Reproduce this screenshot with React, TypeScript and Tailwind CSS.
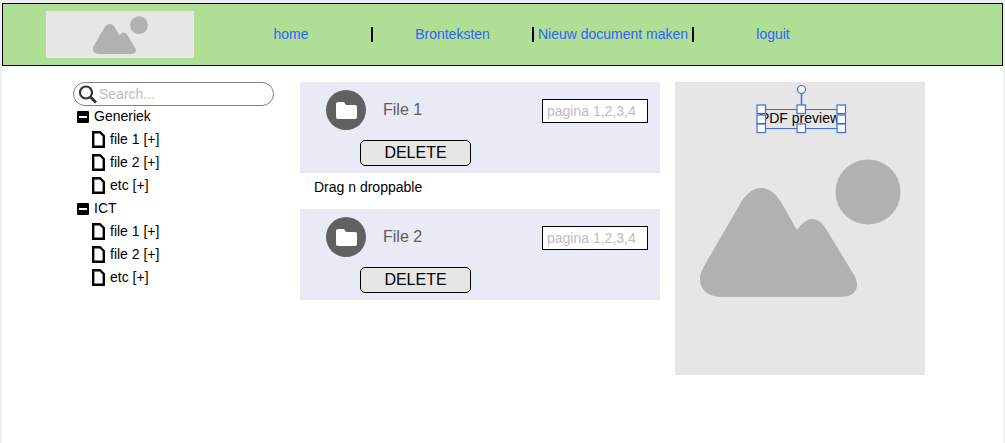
import React from 'react';

const font = 'font-["Liberation_Sans",Arial,sans-serif]';

/** Grey placeholder picture, drawn in the preview's own coordinates */
function PicturePlaceholder({ className }: { className: string }) {
  return (
    <svg viewBox="700 159 201 138" className={className} fill="#b1b1b1">
      <circle cx="868" cy="192" r="32.5" />
      <path d="M723 297C708 297 700 290 700 279C700 273 703 268 707 261L743 199C749 192 754 188 761 188C769 188 775 193 781 202L797 230C802 223 807 219 812 219C818 219 822 223 826 229L851 270C855 276 857 280 857 285C857 293 850 297 840 297Z" />
    </svg>
  );
}

function SearchIcon() {
  return (
    <svg width="19" height="19" viewBox="0 0 19 19" fill="none" stroke="#333333" className="shrink-0">
      <circle cx="8" cy="7.5" r="6" strokeWidth="2.2" />
      <path d="M12.5 12L18 17.5" strokeWidth="3" />
    </svg>
  );
}

function MinusBox() {
  return (
    <span className="flex h-[12px] w-[12px] shrink-0 items-center justify-center rounded-[1px] bg-black">
      <span className="h-[2px] w-[8px] bg-white" />
    </span>
  );
}

function FileIcon() {
  return (
    <svg width="13" height="17" viewBox="0 0 13 17" fill="#ffffff" stroke="#000000" strokeWidth="2.4" className="shrink-0">
      <path d="M1.2 1.2H8L11.8 5V15.8H1.2Z" />
    </svg>
  );
}

function FolderIcon() {
  return (
    <svg width="21" height="17" viewBox="0 0 21 17" fill="#ffffff">
      <path d="M2 0H8L10 3H19C20.2 3 21 3.8 21 5V15C21 16.2 20.2 17 19 17H2C0.8 17 0 16.2 0 15V2C0 0.8 0.8 0 2 0Z" />
    </svg>
  );
}

function NavItem({ label, className, divider = true }: { label: string; className: string; divider?: boolean }) {
  return (
    <div className={`flex h-full items-center ${className}`}>
      <a className="flex-1 text-center text-[14px] text-[#2f62f5]">{label}</a>
      {divider && <span className="h-[15px] w-[2px] bg-black" />}
    </div>
  );
}

function Tree({ title }: { title: string }) {
  return (
    <div>
      <div className="flex h-[23px] items-center gap-[5px] pl-[4px] text-[14px] text-black">
        <MinusBox />
        <span>{title}</span>
      </div>
      {['file 1 [+]', 'file 2 [+]', 'etc [+]'].map((name) => (
        <div key={name} className="flex h-[23px] items-center gap-[5px] pl-[19px] text-[14px] text-black">
          <FileIcon />
          <span>{name}</span>
        </div>
      ))}
    </div>
  );
}

function FileCard({ name }: { name: string }) {
  return (
    <div className="h-[91px] bg-[#e8eaf6] pl-[26px] pr-[12px] pt-[8px]">
      <div className="flex items-start">
        <div className="flex h-[40px] w-[40px] items-center justify-center rounded-full bg-[#616161]">
          <FolderIcon />
        </div>
        <span className="ml-[17px] mt-[10px] text-[16px] leading-[20px] text-[#5c5c5c]">{name}</span>
        <input
          placeholder="pagina 1,2,3,4"
          className="ml-auto mt-[9px] h-[24px] w-[106px] border border-black bg-white pl-[4px] text-[14px] outline-none placeholder:text-[#bdbdbd]"
        />
      </div>
      <button className="ml-[34px] mt-[10px] h-[26px] w-[111px] rounded-[5px] border border-black bg-[#e6e6e6] text-[16px] text-black">
        DELETE
      </button>
    </div>
  );
}

/** Editor selection handles lying over the "PDF preview" label */
function SelectionOverlay() {
  const handles = [
    [761, 109],
    [801, 109],
    [841, 109],
    [761, 119],
    [841, 119],
    [761, 128],
    [801, 128],
    [841, 128],
  ];
  return (
    <svg viewBox="750 84 100 50" className="absolute left-[75px] top-[2px] h-[50px] w-[100px]">
      <path d="M801.5 93V105" stroke="#3f6ae0" strokeWidth="1.5" />
      <rect x="760.5" y="109.5" width="81" height="19" fill="none" stroke="#3f6ae0" />
      <circle cx="801.5" cy="89.5" r="4" fill="#ffffff" stroke="#3f6ae0" strokeWidth="1.2" />
      {handles.map(([x, y]) => (
        <rect key={`${x}-${y}`} x={x - 4} y={y - 4} width="8.5" height="8.5" fill="#ffffff" stroke="#3f6ae0" strokeWidth="1.2" />
      ))}
    </svg>
  );
}

export default function App() {
  return (
    <div className={`${font} h-[443px] w-[1005px] overflow-hidden bg-[#eeeeee] pl-[2px] pr-[2px] pt-[3px]`}>
      <header className="flex h-[63px] items-center border border-black bg-[#afdf95] pl-[43px]">
        <div className="flex h-[47px] w-[148px] items-center justify-center bg-[#e6e6e6]">
          <PicturePlaceholder className="h-[38px] w-[55px]" />
        </div>
        <nav className="ml-[17px] flex h-full items-center">
          <NavItem label="home" className="w-[162px]" />
          <NavItem label="Bronteksten" className="w-[161px]" />
          <NavItem label="Nieuw document maken" className="w-[160px]" />
          <NavItem label="loguit" className="w-[158px]" divider={false} />
        </nav>
      </header>

      <main className="flex h-[377px] items-start bg-white pl-[71px] pt-[16px]">
        <aside className="w-[201px]">
          <div className="flex h-[24px] items-center rounded-full border border-[#808080] bg-white pl-[4px]">
            <SearchIcon />
            <input
              placeholder="Search..."
              className="ml-[2px] w-[150px] bg-transparent text-[14px] outline-none placeholder:text-[#bdbdbd]"
            />
          </div>
          <div className="-mt-px">
            <Tree title="Generiek" />
            <Tree title="ICT" />
          </div>
        </aside>

        <section className="ml-[26px] w-[360px]">
          <FileCard name="File 1" />
          <div className="h-[36px] pl-[14px] pt-[5px] text-[14px] leading-[18px] text-black">Drag n droppable</div>
          <FileCard name="File 2" />
        </section>

        <section className="relative ml-[15px] flex h-[293px] w-[250px] flex-col items-center bg-[#e6e6e6]">
          <div className="mt-[27px] text-[14px] leading-[18px] text-black">PDF preview</div>
          <PicturePlaceholder className="mt-[32px] h-[138px] w-[201px]" />
          <SelectionOverlay />
        </section>
      </main>
    </div>
  );
}
